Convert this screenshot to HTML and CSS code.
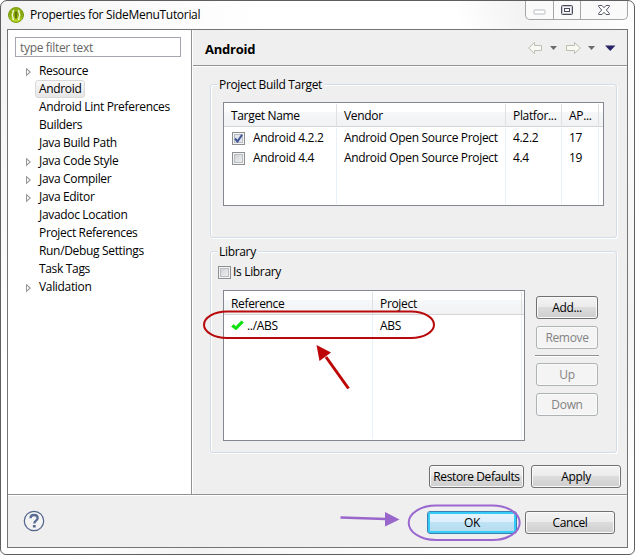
FILE: index.html
```html
<!DOCTYPE html>
<html lang="en">
<head>
<meta charset="utf-8">
<title>Properties for SideMenuTutorial</title>
<link rel="stylesheet" href="styles.css">
</head>
<body>
<div class="window">
  <header class="titlebar">
    <svg class="app-icon" width="16" height="16" viewBox="0 0 16 16"><defs><linearGradient id="lime" x1="0" y1="0" x2="0" y2="1"><stop offset="0" stop-color="#8fb010"/><stop offset=".5" stop-color="#86a80c"/><stop offset="1" stop-color="#bfe02e"/></linearGradient></defs><circle cx="8" cy="8" r="7.5" fill="url(#lime)" stroke="#7d9d14"/><path d="M6.200 3.500Q4.800 3.500 4.800 6Q4.800 8 3.500 8Q4.800 8 4.800 10Q4.800 12.500 6.200 12.500M9.800 3.500Q11.200 3.500 11.200 6Q11.200 8 12.500 8Q11.200 8 11.200 10Q11.200 12.500 9.800 12.500" fill="none" stroke="#f2f7cf" stroke-width="1.400"/><path d="M8 4.500v7" stroke="#56690c" stroke-width="1.600"/></svg>
    <h1 class="title">Properties for SideMenuTutorial</h1>
    <div class="captions">
      <span class="cap cap-min"><svg width="13" height="6"><rect x="1" y="1" width="11" height="4" rx=".5" fill="#fff" stroke="#b8bac0"/></svg></span>
      <span class="cap cap-max"><svg width="12" height="10"><rect x=".5" y=".5" width="11" height="9" rx="1" fill="#f6f6f8" stroke="#4a4c5e"/><rect x="1.500" y="1.500" width="9" height="7" fill="none" stroke="#c9cad2"/><rect x="3.500" y="3.500" width="5" height="3" fill="#fff" stroke="#4a4c5e"/></svg></span>
      <span class="cap cap-close"><svg width="12" height="10" viewBox="0 0 12 10"><path d="M.7.5H4L6 2.700 8 .5H11.300V1.700L8.300 5 11.300 8.300V9.500H8L6 7.300 4 9.500H.7V8.300L3.700 5 .7 1.700Z" fill="#fff" stroke="#555767"/></svg></span>
    </div>
  </header>

  <div class="client">
    <div class="upper">
      <nav class="sidebar">
        <input class="filter" type="text" placeholder="type filter text">
        <ul class="tree">
          <li class="parent"><span>Resource</span></li>
          <li class="selected"><span>Android</span></li>
          <li><span>Android Lint Preferences</span></li>
          <li><span>Builders</span></li>
          <li><span>Java Build Path</span></li>
          <li class="parent"><span>Java Code Style</span></li>
          <li class="parent"><span>Java Compiler</span></li>
          <li class="parent"><span>Java Editor</span></li>
          <li><span>Javadoc Location</span></li>
          <li><span>Project References</span></li>
          <li><span>Run/Debug Settings</span></li>
          <li><span>Task Tags</span></li>
          <li class="parent"><span>Validation</span></li>
        </ul>
      </nav>

      <main class="page">
        <div class="page-head">
          <h2>Android</h2>
          <svg class="nav" width="92" height="14" viewBox="0 0 92 14">
            <g fill="#f8f8f2" stroke="#bdbdb2" stroke-linejoin="round"><path d="M.7 7L6.500 1.500V4.500H13.500V9.500H6.500V12.500Z"/><path d="M52.300 7L46.500 1.500V4.500H38.500V9.500H46.500V12.500Z"/></g>
            <path d="M22 5h7l-3.500 4zM60 5h7l-3.500 4z" fill="#6b6b6b"/>
            <path d="M77 4.500h10.500l-5.250 5.500z" fill="#252366"/>
          </svg>
        </div>

        <section class="group target">
          <h3>Project Build Target</h3>
          <div class="table targets">
            <div class="thead"><span>Target Name</span><span>Vendor</span><span>Platfor...</span><span>AP...</span><span></span></div>
            <div class="tbody">
              <div class="col names">
                <div><i class="check on"><svg width="9" height="9" viewBox="0 0 9 9"><path d="M1 4.500L3.500 7.500 8 .8" fill="none" stroke="#3f5594" stroke-width="2"/></svg></i>Android 4.2.2</div>
                <div><i class="check"></i>Android 4.4</div>
              </div>
              <div class="col vendors"><div>Android Open Source Project</div><div>Android Open Source Project</div></div>
              <div class="col"><div>4.2.2</div><div>4.4</div></div>
              <div class="col"><div>17</div><div>19</div></div>
            </div>
          </div>
        </section>

        <section class="group library">
          <h3>Library</h3>
          <label class="is-lib"><i class="check"></i>Is Library</label>
          <div class="lib-row">
            <div class="table refs">
              <div class="thead"><span>Reference</span><span>Project</span><span></span></div>
              <div class="tbody">
                <div class="col"><div><svg class="tick" width="13" height="11" viewBox="0 0 13 11"><path d="M.5 6.500L2.500 4.500 4.800 6.500 10.500 .8 12.500 2.500 5 10Z" fill="#0de00d" stroke="#0de00d" stroke-width=".6"/></svg>../ABS</div></div>
                <div class="col"><div>ABS</div></div>
              </div>
            </div>
            <div class="side-buttons">
              <button>Add...</button>
              <button disabled>Remove</button>
              <hr>
              <button disabled>Up</button>
              <button disabled>Down</button>
            </div>
          </div>
        </section>

        <div class="page-actions"><button class="restore">Restore Defaults</button><button class="wide">Apply</button></div>
      </main>
    </div>

    <footer class="footer">
      <svg class="help" width="22" height="22" viewBox="0 0 22 22"><circle cx="11" cy="11" r="9.700" fill="#f4f4f5" stroke="#53658d" stroke-width="1.200"/><path d="M7.500 8.200C7.500 5.800 9.200 5 11 5C13.200 5 14.700 6.200 14.700 8.100C14.700 10.800 11.300 10.600 11.300 13.500" fill="none" stroke="#5b6c94" stroke-width="2.300"/><rect x="9.900" y="15" width="2.800" height="2.500" fill="#5b6c94"/></svg>
      <button class="wide default">OK</button><button class="wide">Cancel</button>
    </footer>
  </div>

  <svg class="marks" width="635" height="555" viewBox="0 0 635 555">
    <g fill="none" stroke-width="2">
      <rect x="204" y="311.500" width="230" height="26.500" rx="23" ry="13.250" stroke="#b80a0a"/>
      <rect x="408.700" y="505.500" width="111" height="34.500" rx="27" ry="17.250" stroke="#9b68cf"/>
    </g>
    <path d="M348.500 388.500L326 357" stroke="#bd0505" stroke-width="3"/><path d="M316.500 345L331 352.500 319.500 361Z" fill="#bd0505"/>
    <path d="M340.500 517.500L386 519" stroke="#9966cc" stroke-width="2.600"/><path d="M385 512L399.500 519.500 385 526.500Z" fill="#9966cc"/>
  </svg>
</div>
</body>
</html>
```
FILE: styles.css
```css
* { box-sizing: border-box; }
body { margin: 0; background: #fff; color: #000; }
body, button, input { font: 12px/18px "Open Sans", "Noto Sans", sans-serif; letter-spacing: -0.33px; }
h1, h2, h3, ul { margin: 0; padding: 0; font: inherit; }

.window {
  position: relative;
  width: 635px;
  height: 555px;
  padding: 0 6px 6px;
  border: 1px solid #5e5e60;
  border-radius: 7px 7px 6px 6px;
  background: linear-gradient(70deg, #fff 0, #fff 8%, #f3f3f3 24%, #f8f8f8 32%, #fff 55%, #fff 78%, #f3f3f3 86%, #fff 100%);
}
.titlebar { display: flex; height: 28px; padding-left: 1px; }
.app-icon { margin-top: 6px; }
.title { flex: 1; padding: 5px 0 0 6px; letter-spacing: -0.3px; }
.captions {
  display: flex;
  width: 103px;
  height: 19px;
  border: 1px solid #a5a5a8;
  border-top: 0;
  border-radius: 0 0 5px 5px;
  background: #fafafa;
}
.cap { display: flex; align-items: center; justify-content: center; width: 28px; border-right: 1px solid #a5a5a8; }
.cap-min { padding-top: 4px; }
.cap-max { width: 27px; }
.cap-close { flex: 1; border: 0; }

.client { height: 519px; width: 621px; border: 1px solid #747476; background: #efefef; }
.upper { display: flex; height: 465px; border-bottom: 1px solid #929292; }
.sidebar { width: 184px; padding: 7px; border-right: 1px solid #929292; background: #fff; }
.filter {
  display: block;
  width: 166px;
  height: 20px;
  padding: 0 4px;
  border: 1px solid #a4a5ae;
  outline: 0;
  background: #fff;
}
.filter::placeholder { color: #666; opacity: 1; }
.tree { margin-top: 5px; list-style: none; }
.tree li { display: flex; align-items: center; height: 18px; padding-left: 20px; }
.tree li span { padding: 0 3px; border: 1px solid transparent; line-height: 16px; }
.tree .selected span { border-color: #d9d9d9; border-radius: 3px; background: linear-gradient(#f9f9f9, #e6e6e6); }
.tree .parent { padding-left: 11px; }
.tree .parent::before {
  width: 9px;
  height: 9px;
  margin-top: 2px;
  background: #999;
  clip-path: polygon(evenodd, 0 0, 5px 4.5px, 0 9px, 0 0, 1px 2.4px, 1px 6.6px, 3.4px 4.5px, 1px 2.4px);
  content: "";
}

.page { flex: 1; border-left: 1px solid #fff; }
.page-head { display: flex; align-items: center; height: 36px; padding: 2px 7px 0 12px; border-bottom: 1px solid #929292; box-shadow: 0 1px #fff; }
.page-head h2 { flex: 1; font-size: 13px; font-weight: 700; letter-spacing: -0.25px; }
.nav { margin-top: -1px; }

.group { width: 407px; margin-left: 17px; border: 1px solid #d3dde7; border-radius: 3px; box-shadow: 1px 1px #fff, inset 1px 1px #fff; }
.group h3 { width: max-content; height: 18px; margin: -9px 0 0 6px; padding: 0 2px; background: #efefef; }
.target { height: 154px; margin-top: 18px; }
.library { height: 202px; margin-top: 13px; }
.table { display: flex; flex-direction: column; margin-left: 12px; border: 1px solid #828790; background: #fff; }
.thead { display: grid; height: 24px; padding-top: 1px; border-bottom: 1px solid #d5d5d5; background: linear-gradient(#fff 0, #fff 40%, #f6f7f8 41%, #f1f2f4 100%); }
.thead span { padding: 3px 0 0 7px; border-right: 1px solid #dfe0e2; }
.thead span:last-child { border: 0; }
.tbody { display: grid; flex: 1; }
.col { margin-bottom: 1px; padding-left: 7px; border-right: 1px solid #e9f0f7; white-space: nowrap; }
.targets { width: 381px; height: 104px; margin-top: 8px; }
.targets .thead, .targets .tbody { grid-template-columns: 113px 169px 56px 37px 4px; }
.targets .tbody { padding-top: 1px; line-height: 20px; }
.names div { display: flex; align-items: center; padding-left: 1px; }
.names .check { margin-right: 8px; }
.check { display: inline-flex; align-items: center; justify-content: center; width: 13px; height: 13px; border: 1px solid #8e8f8f; background: linear-gradient(135deg, #c9ccd1, #f5f5f5); box-shadow: inset 0 0 0 1px #f4f4f4, inset 0 0 0 2px #b9bdc2; }
.check.on { background: #e3e6ec; }
.is-lib { display: flex; align-items: center; gap: 2px; height: 18px; margin: 2px 0 0 7px; }
.lib-row { display: flex; gap: 10px; margin-top: 9px; }
.refs { width: 302px; height: 151px; }
.refs .thead, .refs .tbody { grid-template-columns: 149px 149px 2px; }
.refs .thead { padding-top: 1px; }
.refs .tbody { line-height: 21px; }
.tick { margin-right: 3px; vertical-align: -1px; }

button { height: 23px; padding: 1px 0 0; border: 1px solid #707070; border-radius: 3px; background: linear-gradient(#f3f3f3 0, #ebebeb 48%, #dcdcdc 50%, #cecece); box-shadow: inset 0 0 0 1px #fafafa; color: #000; }
button:disabled { border-color: #adb2b5; background: #f4f4f4; color: #838383; }
.side-buttons { display: flex; flex-direction: column; gap: 7px; width: 64px; padding: 6px 1px 0; }
.side-buttons hr { width: 64px; height: 2px; margin: -1px; border: 0; border-top: 1px solid #929292; border-bottom: 1px solid #fff; }
.page-actions { display: flex; justify-content: flex-end; gap: 7px; margin: 12px 6px 0 0; }
.restore { width: 95px; letter-spacing: -0.4px; }
.wide { width: 90px; }
.footer { display: flex; gap: 8px; height: 52px; padding: 15px 12px 0 15px; border-top: 1px solid #fff; }
.help { margin: -1px auto 0 0; }
.default { border-color: #3c7fb1; background: linear-gradient(#e7f4fc 0, #dceffa 48%, #bfe3f6 50%, #b5daec); box-shadow: inset 0 0 0 2px #35cdf7; }
.marks { position: absolute; top: -1px; left: -1px; pointer-events: none; }
```
